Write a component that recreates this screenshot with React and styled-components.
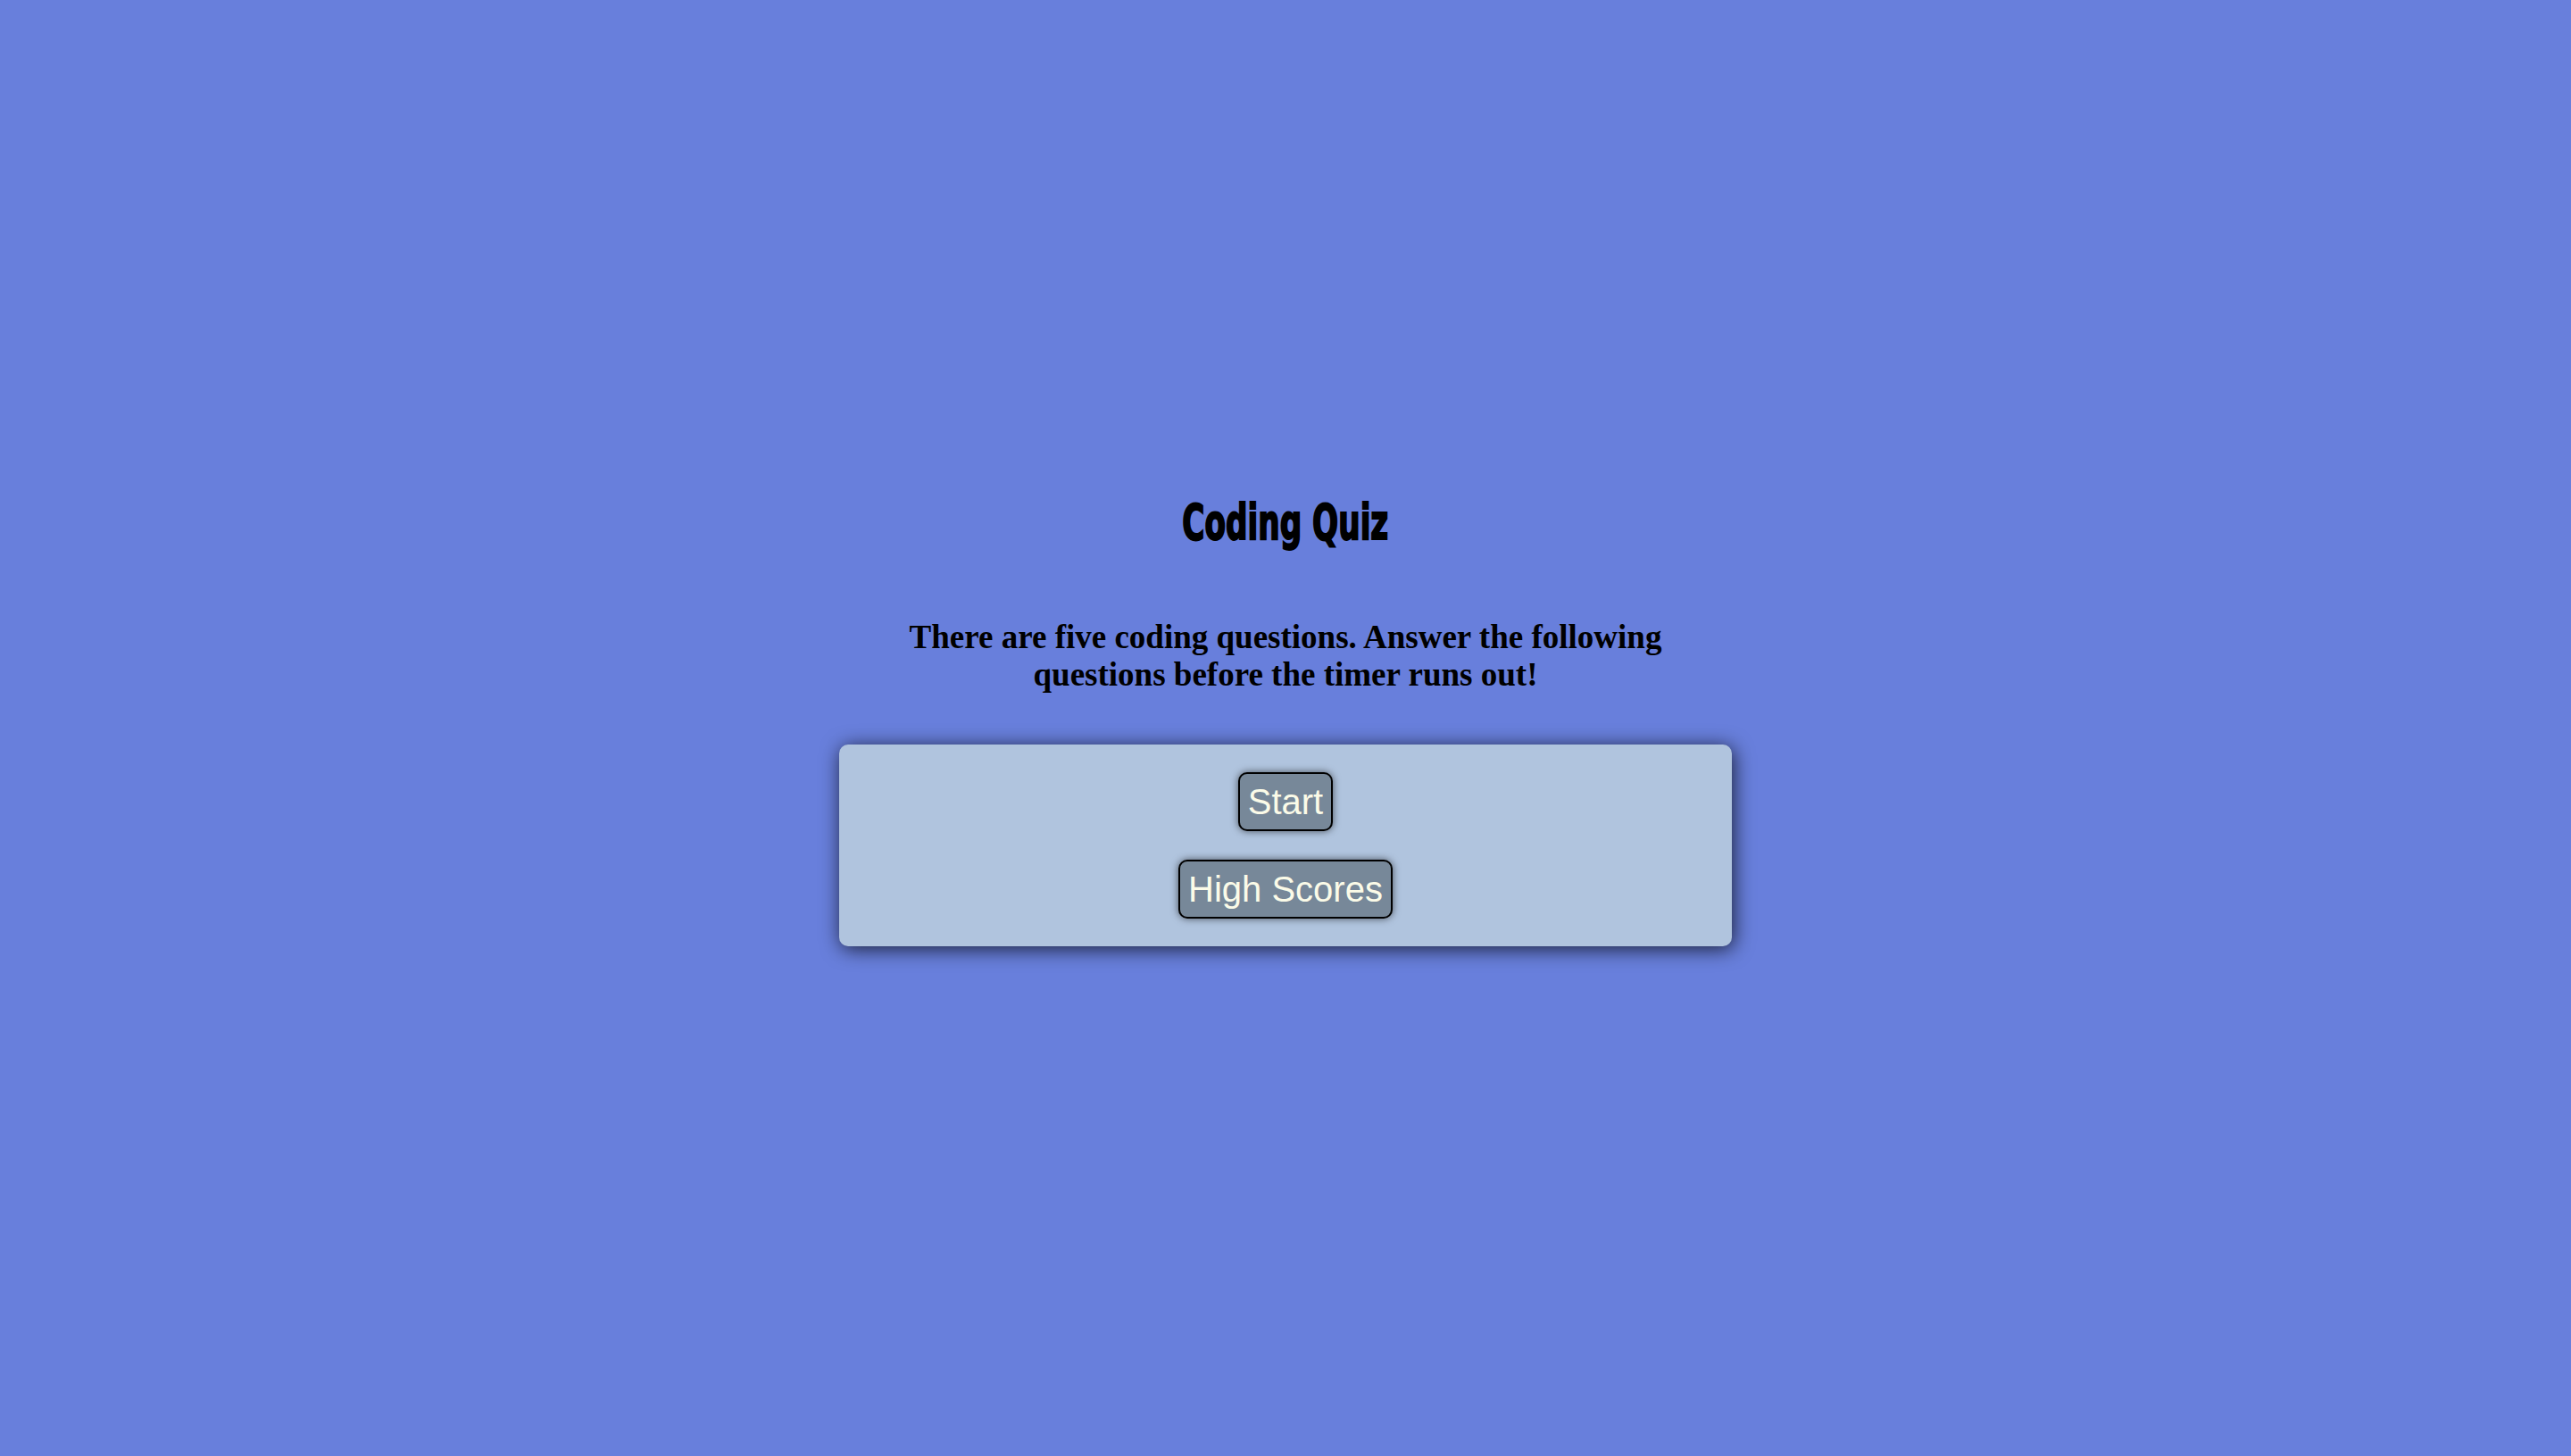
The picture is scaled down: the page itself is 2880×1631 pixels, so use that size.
import React from "react";
import styled, { createGlobalStyle } from "styled-components";

const GlobalStyle = createGlobalStyle`
  html, body {
    margin: 0;
    padding: 0;
    background-color: #687fdc;
  }
`;

export default function App() {
  return (
    <>
      <GlobalStyle />
      <Page>
        <Title>Coding Quiz</Title>
        <Intro>
          There are five coding questions. Answer the following questions
          before the timer runs out!
        </Intro>
        <Panel>
          <QuizButton>Start</QuizButton>
          <QuizButton>High Scores</QuizButton>
        </Panel>
      </Page>
    </>
  );
}

const Page = styled.main`
  min-height: 100vh;
  box-sizing: border-box;
  padding-bottom: 14px;
  display: flex;
  flex-direction: column;
  justify-content: center;
  align-items: center;
  background-color: #687fdc;
`;

const Title = styled.h1`
  margin: 0;
  font-family: "Liberation Sans Narrow", "DejaVu Sans Condensed", "Liberation Sans", sans-serif;
  font-weight: 700;
  font-size: 56px;
  line-height: 56px;
  color: #000;
  transform: scaleX(0.68);
  -webkit-text-stroke: 2px #000;
`;

const Intro = styled.p`
  margin: 80px 0 57px;
  max-width: 900px;
  font-family: "Liberation Serif", "Times New Roman", serif;
  font-weight: 700;
  font-size: 37px;
  line-height: 42px;
  text-align: center;
  color: #000;
`;

const Panel = styled.div`
  width: 1000px;
  box-sizing: border-box;
  padding: 31px 0;
  display: flex;
  flex-direction: column;
  align-items: center;
  gap: 32px;
  background-color: #b0c4de;
  border-radius: 10px;
  box-shadow: 2px 3px 22px rgba(0, 0, 0, 0.75);
`;

const QuizButton = styled.button`
  padding: 8px 9px;
  font-family: "Liberation Sans", Arial, sans-serif;
  font-size: 40px;
  line-height: 46px;
  color: #fbfbe8;
  background-color: #778899;
  border: 2px solid #000;
  border-radius: 10px;
  box-shadow: 0 0 8px rgba(0, 0, 0, 0.6);
  cursor: pointer;
`;
